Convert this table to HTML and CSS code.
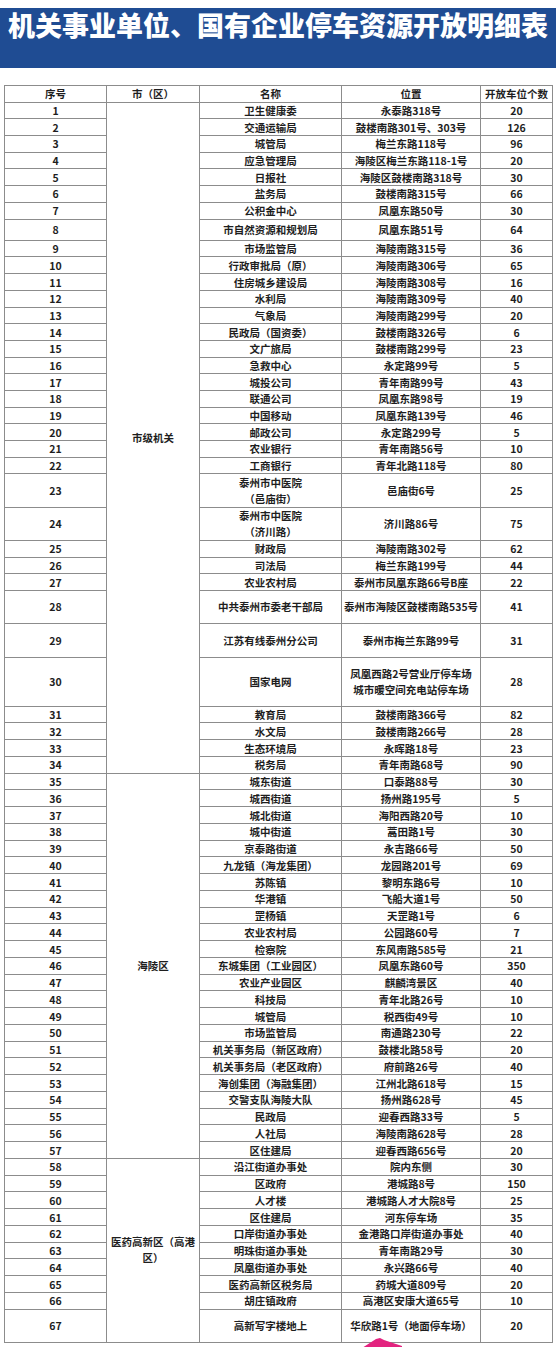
FILE: index.html
```html
<!DOCTYPE html>
<html lang="zh-CN">
<head>
<meta charset="utf-8">
<title>机关事业单位、国有企业停车资源开放明细表</title>
<link rel="stylesheet" href="styles.css">
</head>
<body>
<div class="page">
  <header class="banner">
    <h1 class="title">机关事业单位、国有企业停车资源开放明细表</h1>
  </header>
  <table class="grid">
    <colgroup>
      <col class="c-no"><col class="c-dist"><col class="c-name"><col class="c-loc"><col class="c-num">
    </colgroup>
    <thead>
      <tr><th>序号</th><th>市（区）</th><th>名称</th><th>位置</th><th>开放车位个数</th></tr>
    </thead>
    <tbody>
      <tr><td>1</td><td rowspan="34">市级机关</td><td>卫生健康委</td><td>永泰路318号</td><td>20</td></tr>
      <tr><td>2</td><td>交通运输局</td><td>鼓楼南路301号、303号</td><td>126</td></tr>
      <tr><td>3</td><td>城管局</td><td>梅兰东路118号</td><td>96</td></tr>
      <tr><td>4</td><td>应急管理局</td><td>海陵区梅兰东路118-1号</td><td>20</td></tr>
      <tr><td>5</td><td>日报社</td><td>海陵区鼓楼南路318号</td><td>30</td></tr>
      <tr><td>6</td><td>盐务局</td><td>鼓楼南路315号</td><td>66</td></tr>
      <tr><td>7</td><td>公积金中心</td><td>凤凰东路50号</td><td>30</td></tr>
      <tr class="h8"><td>8</td><td>市自然资源和规划局</td><td>凤凰东路51号</td><td>64</td></tr>
      <tr><td>9</td><td>市场监管局</td><td>海陵南路315号</td><td>36</td></tr>
      <tr><td>10</td><td>行政审批局（原）</td><td>海陵南路306号</td><td>65</td></tr>
      <tr><td>11</td><td>住房城乡建设局</td><td>海陵南路308号</td><td>16</td></tr>
      <tr><td>12</td><td>水利局</td><td>海陵南路309号</td><td>40</td></tr>
      <tr><td>13</td><td>气象局</td><td>海陵南路299号</td><td>20</td></tr>
      <tr><td>14</td><td>民政局（国资委）</td><td>鼓楼南路326号</td><td>6</td></tr>
      <tr><td>15</td><td>文广旅局</td><td>鼓楼南路299号</td><td>23</td></tr>
      <tr><td>16</td><td>急救中心</td><td>永定路99号</td><td>5</td></tr>
      <tr><td>17</td><td>城投公司</td><td>青年南路99号</td><td>43</td></tr>
      <tr><td>18</td><td>联通公司</td><td>凤凰东路98号</td><td>19</td></tr>
      <tr><td>19</td><td>中国移动</td><td>凤凰东路139号</td><td>46</td></tr>
      <tr><td>20</td><td>邮政公司</td><td>永定路299号</td><td>5</td></tr>
      <tr><td>21</td><td>农业银行</td><td>青年南路56号</td><td>10</td></tr>
      <tr><td>22</td><td>工商银行</td><td>青年北路118号</td><td>80</td></tr>
      <tr class="h2"><td>23</td><td>泰州市中医院<br>（邑庙街）</td><td>邑庙街6号</td><td>25</td></tr>
      <tr class="h2"><td>24</td><td>泰州市中医院<br>（济川路）</td><td>济川路86号</td><td>75</td></tr>
      <tr><td>25</td><td>财政局</td><td>海陵南路302号</td><td>62</td></tr>
      <tr><td>26</td><td>司法局</td><td>梅兰东路199号</td><td>44</td></tr>
      <tr><td>27</td><td>农业农村局</td><td>泰州市凤凰东路66号B座</td><td>22</td></tr>
      <tr class="h2"><td>28</td><td>中共泰州市委老干部局</td><td>泰州市海陵区鼓楼南路535号</td><td>41</td></tr>
      <tr class="h2"><td>29</td><td>江苏有线泰州分公司</td><td>泰州市梅兰东路99号</td><td>31</td></tr>
      <tr class="h3"><td>30</td><td>国家电网</td><td>凤凰西路2号营业厅停车场<br>城市暖空间充电站停车场</td><td>28</td></tr>
      <tr class="b"><td>31</td><td>教育局</td><td>鼓楼南路366号</td><td>82</td></tr>
      <tr class="b"><td>32</td><td>水文局</td><td>鼓楼南路266号</td><td>28</td></tr>
      <tr class="b"><td>33</td><td>生态环境局</td><td>永晖路18号</td><td>23</td></tr>
      <tr class="b"><td>34</td><td>税务局</td><td>青年南路68号</td><td>90</td></tr>
      <tr class="b"><td>35</td><td rowspan="23">海陵区</td><td>城东街道</td><td>口泰路88号</td><td>30</td></tr>
      <tr class="b"><td>36</td><td>城西街道</td><td>扬州路195号</td><td>5</td></tr>
      <tr class="b"><td>37</td><td>城北街道</td><td>海阳西路20号</td><td>10</td></tr>
      <tr class="b"><td>38</td><td>城中街道</td><td>蒿田路1号</td><td>30</td></tr>
      <tr class="b"><td>39</td><td>京泰路街道</td><td>永吉路66号</td><td>50</td></tr>
      <tr class="b"><td>40</td><td>九龙镇（海龙集团）</td><td>龙园路201号</td><td>69</td></tr>
      <tr class="b"><td>41</td><td>苏陈镇</td><td>黎明东路6号</td><td>10</td></tr>
      <tr class="b"><td>42</td><td>华港镇</td><td>飞船大道1号</td><td>50</td></tr>
      <tr class="b"><td>43</td><td>罡杨镇</td><td>天罡路1号</td><td>6</td></tr>
      <tr class="b"><td>44</td><td>农业农村局</td><td>公园路60号</td><td>7</td></tr>
      <tr class="b"><td>45</td><td>检察院</td><td>东风南路585号</td><td>21</td></tr>
      <tr class="b"><td>46</td><td>东城集团（工业园区）</td><td>凤凰东路60号</td><td>350</td></tr>
      <tr class="b"><td>47</td><td>农业产业园区</td><td>麒麟湾景区</td><td>40</td></tr>
      <tr class="b"><td>48</td><td>科技局</td><td>青年北路26号</td><td>10</td></tr>
      <tr class="b"><td>49</td><td>城管局</td><td>税西街49号</td><td>10</td></tr>
      <tr class="b"><td>50</td><td>市场监管局</td><td>南通路230号</td><td>22</td></tr>
      <tr class="b"><td>51</td><td>机关事务局（新区政府）</td><td>鼓楼北路58号</td><td>20</td></tr>
      <tr class="b"><td>52</td><td>机关事务局（老区政府）</td><td>府前路26号</td><td>40</td></tr>
      <tr class="b"><td>53</td><td>海创集团（海融集团）</td><td>江州北路618号</td><td>15</td></tr>
      <tr class="b"><td>54</td><td>交警支队海陵大队</td><td>扬州路628号</td><td>45</td></tr>
      <tr class="b"><td>55</td><td>民政局</td><td>迎春西路33号</td><td>5</td></tr>
      <tr class="b"><td>56</td><td>人社局</td><td>海陵南路628号</td><td>28</td></tr>
      <tr class="b"><td>57</td><td>区住建局</td><td>迎春西路656号</td><td>20</td></tr>
      <tr class="b"><td>58</td><td rowspan="10" class="wrap">医药高新区（高港区）</td><td>沿江街道办事处</td><td>院内东侧</td><td>30</td></tr>
      <tr class="b"><td>59</td><td>区政府</td><td>港城路8号</td><td>150</td></tr>
      <tr class="b"><td>60</td><td>人才楼</td><td>港城路人才大院8号</td><td>25</td></tr>
      <tr class="b"><td>61</td><td>区住建局</td><td>河东停车场</td><td>35</td></tr>
      <tr class="b"><td>62</td><td>口岸街道办事处</td><td>金港路口岸街道办事处</td><td>40</td></tr>
      <tr class="b"><td>63</td><td>明珠街道办事处</td><td>青年南路29号</td><td>30</td></tr>
      <tr class="b"><td>64</td><td>凤凰街道办事处</td><td>永兴路66号</td><td>40</td></tr>
      <tr class="b"><td>65</td><td>医药高新区税务局</td><td>药城大道809号</td><td>20</td></tr>
      <tr class="b"><td>66</td><td>胡庄镇政府</td><td>高港区安康大道65号</td><td>10</td></tr>
      <tr class="h2"><td>67</td><td>高新写字楼地上</td><td>华欣路1号（地面停车场）</td><td>20</td></tr>
    </tbody>
  </table>
  <svg class="arrow" width="40" height="12" viewBox="0 0 40 12" aria-hidden="true">
    <polygon points="0,11 14,2 18,1 22,3 40,9 40,12 0,12" fill="#e3237f"/>
  </svg>
</div>
</body>
</html>
```
FILE: styles.css
```css
html, body {
  margin: 0;
  padding: 0;
  background: #ffffff;
}

.page {
  position: relative;
  width: 556px;
  height: 1347px;
  overflow: hidden;
  padding-top: 8px;
  box-sizing: border-box;
}

.banner {
  height: 60px;
  background: #1f4c93;
  box-sizing: border-box;
  padding-top: 2px;
}

.title {
  margin: 0;
  font-family: "Noto Sans CJK SC", "Noto Sans", sans-serif;
  font-weight: 900;
  font-size: 27px;
  line-height: 30px;
  letter-spacing: 0;
  color: #ffffff;
  text-align: center;
  white-space: nowrap;
}

.grid {
  margin: 17px 0 0 4px;
  width: 548px;
  table-layout: fixed;
  border-collapse: collapse;
  font-family: "Noto Sans CJK SC", "Noto Sans", sans-serif;
  font-weight: bold;
  font-size: 10.5px;
  line-height: 13px;
  color: #1e1e1e;
}

.c-no { width: 102px; }
.c-dist { width: 93px; }
.c-name { width: 142px; }
.c-loc { width: 139px; }
.c-num { width: 72px; }

.grid th,
.grid td {
  border: 1px solid #8c8c8c;
  padding: 0 2px;
  text-align: center;
  vertical-align: middle;
  white-space: nowrap;
  font-weight: bold;
}

.grid td.wrap {
  white-space: normal;
  padding: 0 4px;
  line-height: 16px;
}

.grid tr { height: 16.7px; }
.grid tr.b { height: 16.75px; }
.grid tr.h8 { height: 21.3px; }
.grid tr.h2 { height: 33.3px; }
.grid tr.h3 { height: 49px; }

.grid tr.h2 td,
.grid tr.h3 td {
  line-height: 16px;
}

.arrow {
  position: absolute;
  left: 362px;
  top: 1337px;
}
```
